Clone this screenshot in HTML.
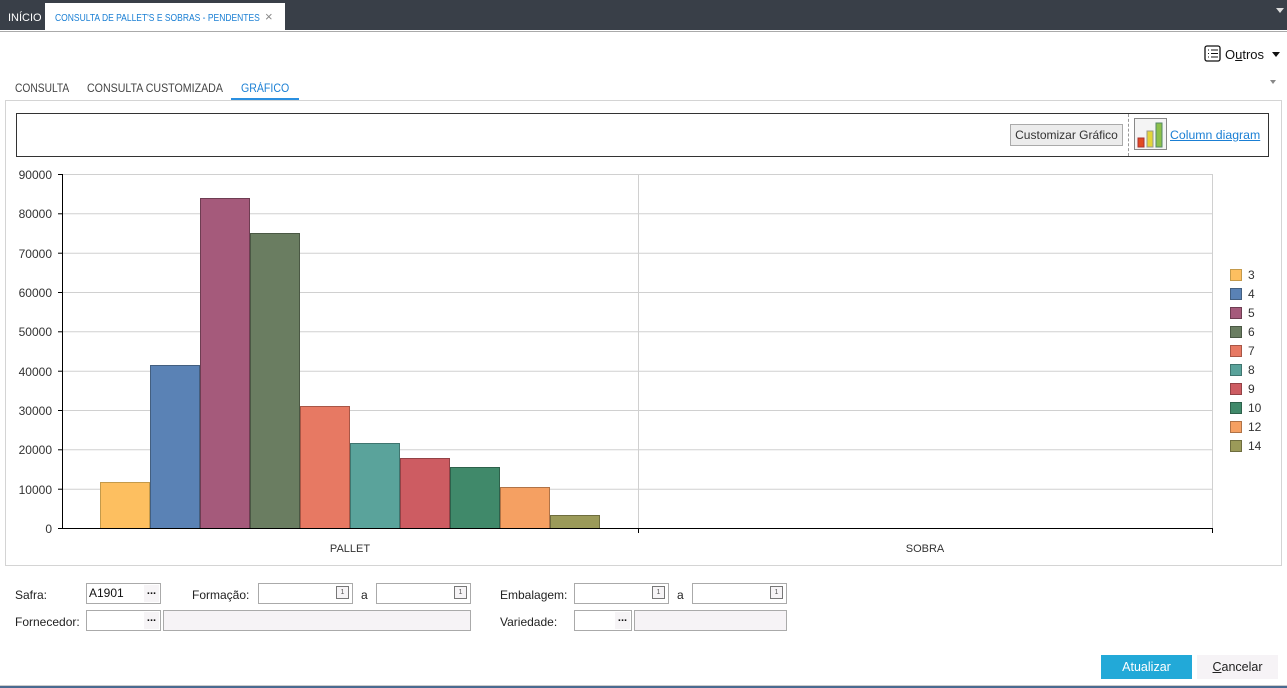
<!DOCTYPE html>
<html><head><meta charset="utf-8"><style>
*{margin:0;padding:0;box-sizing:border-box}
body{width:1287px;height:688px;position:relative;background:#fff;font-family:"Liberation Sans",sans-serif;overflow:hidden;color:#333}
.a{position:absolute}
.lbl{font-size:12px;color:#222}
.inp{position:absolute;border:1px solid #aaa;background:#fff;height:21px}
.dots{position:absolute;right:1px;top:1px;width:15px;height:17px;background:#f6f4f6;font-size:11px;font-weight:bold;text-align:center;line-height:12px;color:#111}
.cal{position:absolute;right:3px;top:2px;width:13px;height:13px;border:1px solid #777;font-size:7px;text-align:center;line-height:12px;color:#555;background:#f6f4f6}
.sx{transform-origin:left center;white-space:nowrap}
</style></head><body>
<div class="a" style="left:0;top:0;width:1287px;height:30px;background:#393f48"></div>
<div class="a" style="left:8px;top:12px;font-size:11px;color:#fff">INÍCIO</div>
<div class="a" style="left:45px;top:3px;width:240px;height:27px;background:#fff"></div>
<div class="a sx" style="left:55px;top:12px;font-size:10.5px;color:#1a7fd4;transform:scaleX(0.81)">CONSULTA DE PALLET'S E SOBRAS - PENDENTES</div>
<div class="a" style="left:265px;top:9px;font-size:13px;color:#888">×</div>
<div class="a" style="left:1276px;top:8px;width:0;height:0;border-left:4px solid transparent;border-right:4px solid transparent;border-top:5px solid #ddd"></div>
<div class="a" style="left:0;top:31px;width:1287px;height:1px;background:#aaa"></div>
<svg class="a" style="left:1204px;top:45px" width="18" height="18"><rect x="1" y="1" width="15" height="15" rx="2" fill="none" stroke="#111" stroke-width="1.3"/><g stroke="#111"><line x1="4" y1="5" x2="5" y2="5"/><line x1="7" y1="5" x2="14" y2="5"/><line x1="4" y1="8.5" x2="5" y2="8.5"/><line x1="7" y1="8.5" x2="14" y2="8.5"/><line x1="4" y1="12" x2="5" y2="12"/><line x1="7" y1="12" x2="14" y2="12"/></g></svg>
<div class="a" style="left:1225px;top:47px;font-size:13px;color:#111">O<u>u</u>tros</div>
<div class="a" style="left:1272px;top:52px;width:0;height:0;border-left:4px solid transparent;border-right:4px solid transparent;border-top:5px solid #111"></div>
<div class="a" style="left:1270px;top:80px;width:0;height:0;border-left:3.5px solid transparent;border-right:3.5px solid transparent;border-top:4px solid #888"></div>
<div class="a sx" style="left:15px;top:83px;font-size:11.5px;color:#444;transform:scaleX(0.89)">CONSULTA</div>
<div class="a sx" style="left:87px;top:83px;font-size:11.5px;color:#444;transform:scaleX(0.925)">CONSULTA CUSTOMIZADA</div>
<div class="a sx" style="left:241px;top:83px;font-size:11.5px;color:#1a7fd4;transform:scaleX(0.92)">GRÁFICO</div>
<div class="a" style="left:231px;top:98px;width:68px;height:3px;background:#2a8fe0"></div>
<div class="a" style="left:5px;top:100px;width:1277px;height:466px;border:1px solid #d4d4d4"></div>
<div class="a" style="left:16px;top:113px;width:1253px;height:44px;border:1px solid #333"></div>
<div class="a" style="left:1010px;top:124px;width:113px;height:22px;border:1px solid #aaa;background:#ececec;font-size:12px;color:#333;text-align:center;line-height:20px">Customizar Gráfico</div>
<div class="a" style="left:1128px;top:114px;height:42px;border-left:1px dashed #999"></div>
<svg class="a" style="left:1134px;top:118px" width="33" height="32"><rect x="0.5" y="0.5" width="32" height="31" fill="#f4f4f4" stroke="#888"/><rect x="4" y="20" width="6" height="9" fill="#e24a22" stroke="#a33"/><rect x="13" y="13" width="6" height="16" fill="#e4d53a" stroke="#998"/><rect x="22" y="5" width="6" height="24" fill="#8cc04a" stroke="#586"/></svg>
<div class="a" style="left:1170px;top:128px;font-size:12.3px;color:#1a7fd4;text-decoration:underline">Column diagram</div>
<svg class="a" style="left:0;top:160px" width="1287" height="400" font-family="Liberation Sans" font-size="12">
<g transform="translate(0,-160)">
<g stroke="#d0d0d0" stroke-width="1">
<line x1="63" y1="174.5" x2="1213" y2="174.5"/><line x1="63" y1="213.8" x2="1213" y2="213.8"/><line x1="63" y1="253.2" x2="1213" y2="253.2"/><line x1="63" y1="292.5" x2="1213" y2="292.5"/><line x1="63" y1="331.8" x2="1213" y2="331.8"/><line x1="63" y1="371.2" x2="1213" y2="371.2"/><line x1="63" y1="410.5" x2="1213" y2="410.5"/><line x1="63" y1="449.8" x2="1213" y2="449.8"/><line x1="63" y1="489.2" x2="1213" y2="489.2"/>
<line x1="638.5" y1="174" x2="638.5" y2="528"/><line x1="1212.5" y1="174" x2="1212.5" y2="528"/>
</g>
<g stroke-width="1">
<rect x="100.5" y="482.5" width="49" height="46" fill="#fdbf60" stroke="#c49a4b"/>
<rect x="150.5" y="365.5" width="49" height="163" fill="#5a82b5" stroke="#435f80"/>
<rect x="200.5" y="198.5" width="49" height="330" fill="#a55a7b" stroke="#6e3d52"/>
<rect x="250.5" y="233.5" width="49" height="295" fill="#6a7d61" stroke="#4a5844"/>
<rect x="300.5" y="406.5" width="49" height="122" fill="#e77963" stroke="#a85646"/>
<rect x="350.5" y="443.5" width="49" height="85" fill="#5aa39b" stroke="#3f756f"/>
<rect x="400.5" y="458.5" width="49" height="70" fill="#cd5c62" stroke="#934246"/>
<rect x="450.5" y="467.5" width="49" height="61" fill="#40896a" stroke="#2d614b"/>
<rect x="500.5" y="487.5" width="49" height="41" fill="#f5a062" stroke="#b07347"/>
<rect x="550.5" y="515.5" width="49" height="13" fill="#9b9a59" stroke="#6e6d3f"/>
</g>
<line x1="62.5" y1="174" x2="62.5" y2="529" stroke="#000"/>
<line x1="62" y1="528.5" x2="1213" y2="528.5" stroke="#000"/>
<g stroke="#000"><line x1="58" y1="174.5" x2="62" y2="174.5"/><line x1="58" y1="213.8" x2="62" y2="213.8"/><line x1="58" y1="253.2" x2="62" y2="253.2"/><line x1="58" y1="292.5" x2="62" y2="292.5"/><line x1="58" y1="331.8" x2="62" y2="331.8"/><line x1="58" y1="371.2" x2="62" y2="371.2"/><line x1="58" y1="410.5" x2="62" y2="410.5"/><line x1="58" y1="449.8" x2="62" y2="449.8"/><line x1="58" y1="489.2" x2="62" y2="489.2"/><line x1="58" y1="528.5" x2="62" y2="528.5"/><line x1="638.5" y1="528" x2="638.5" y2="533"/><line x1="1212.5" y1="528" x2="1212.5" y2="533"/></g>
<g fill="#333" text-anchor="end">
<text x="52" y="179">90000</text><text x="52" y="218">80000</text><text x="52" y="258">70000</text><text x="52" y="297">60000</text><text x="52" y="336">50000</text><text x="52" y="376">40000</text><text x="52" y="415">30000</text><text x="52" y="454">20000</text><text x="52" y="494">10000</text><text x="52" y="533">0</text>
</g>
<text x="350" y="552" text-anchor="middle" font-size="11" fill="#333">PALLET</text>
<text x="925" y="552" text-anchor="middle" font-size="11" fill="#333">SOBRA</text>
<g stroke-width="1" font-size="12">
<rect x="1230.5" y="269.5" width="11" height="11" fill="#fdbf60" stroke="#c49a4b"/><text x="1248" y="279" fill="#333">3</text>
<rect x="1230.5" y="288.5" width="11" height="11" fill="#5a82b5" stroke="#435f80"/><text x="1248" y="298" fill="#333">4</text>
<rect x="1230.5" y="307.5" width="11" height="11" fill="#a55a7b" stroke="#6e3d52"/><text x="1248" y="317" fill="#333">5</text>
<rect x="1230.5" y="326.5" width="11" height="11" fill="#6a7d61" stroke="#4a5844"/><text x="1248" y="336" fill="#333">6</text>
<rect x="1230.5" y="345.5" width="11" height="11" fill="#e77963" stroke="#a85646"/><text x="1248" y="355" fill="#333">7</text>
<rect x="1230.5" y="364.5" width="11" height="11" fill="#5aa39b" stroke="#3f756f"/><text x="1248" y="374" fill="#333">8</text>
<rect x="1230.5" y="383.5" width="11" height="11" fill="#cd5c62" stroke="#934246"/><text x="1248" y="393" fill="#333">9</text>
<rect x="1230.5" y="402.5" width="11" height="11" fill="#40896a" stroke="#2d614b"/><text x="1248" y="412" fill="#333">10</text>
<rect x="1230.5" y="421.5" width="11" height="11" fill="#f5a062" stroke="#b07347"/><text x="1248" y="431" fill="#333">12</text>
<rect x="1230.5" y="440.5" width="11" height="11" fill="#9b9a59" stroke="#6e6d3f"/><text x="1248" y="450" fill="#333">14</text>
</g>
</g></svg>

<div class="a lbl" style="left:15px;top:588px">Safra:</div>
<div class="inp" style="left:86px;top:583px;width:75px"><span style="position:absolute;left:2px;top:2px;font-size:12px;color:#111">A1901</span><div class="dots">...</div></div>
<div class="a lbl" style="left:192px;top:588px">Formação:</div>
<div class="inp" style="left:258px;top:583px;width:95px"><div class="cal">1</div></div>
<div class="a lbl" style="left:361px;top:588px">a</div>
<div class="inp" style="left:376px;top:583px;width:95px"><div class="cal">1</div></div>
<div class="a lbl" style="left:500px;top:588px">Embalagem:</div>
<div class="inp" style="left:574px;top:583px;width:95px"><div class="cal">1</div></div>
<div class="a lbl" style="left:677px;top:588px">a</div>
<div class="inp" style="left:692px;top:583px;width:95px"><div class="cal">1</div></div>
<div class="a lbl" style="left:15px;top:615px">Fornecedor:</div>
<div class="inp" style="left:86px;top:610px;width:75px"><div class="dots">...</div></div>
<div class="inp" style="left:163px;top:610px;width:308px;background:#f6f3f6"></div>
<div class="a lbl" style="left:500px;top:615px">Variedade:</div>
<div class="inp" style="left:574px;top:610px;width:58px"><div class="dots">...</div></div>
<div class="inp" style="left:634px;top:610px;width:153px;background:#f6f3f6"></div>
<div class="a" style="left:1101px;top:655px;width:91px;height:24px;background:#22a9d8;color:#fff;font-size:12.5px;text-align:center;line-height:24px">Atualizar</div>
<div class="a" style="left:1197px;top:655px;width:81px;height:24px;background:#f6f3f6;color:#222;font-size:12.5px;text-align:center;line-height:24px"><u>C</u>ancelar</div>
<div class="a" style="left:0;top:685px;width:1287px;height:3px;background:#4a6a90;border-top:1px solid #ccc"></div>
</body></html>
